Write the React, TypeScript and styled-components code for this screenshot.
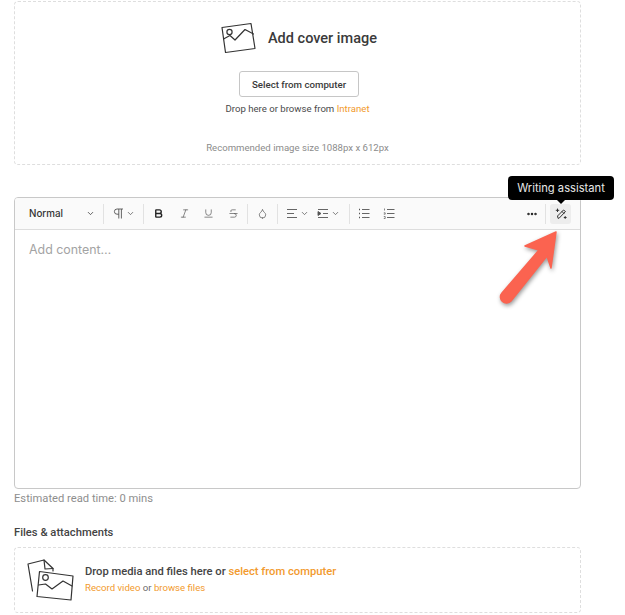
import React from "react";
import styled, { createGlobalStyle } from "styled-components";
import { Bold, ChevronDown, Droplet, Italic, MoreHorizontal, Strikethrough, Underline } from "lucide-react";

const GlobalStyle = createGlobalStyle`
  html, body {
    margin: 0;
    padding: 0;
    background: #ffffff;
  }
  body {
    font-family: Roboto, "Liberation Sans", sans-serif;
    color: #3b3b3b;
  }
`;

const Page = styled.div`
  position: relative;
  width: 625px;
  height: 615px;
  overflow: hidden;
  box-sizing: border-box;
  padding: 1px 44px 0 14px;
`;

const CoverBox = styled.section`
  box-sizing: border-box;
  height: 164px;
  border: 1px dashed #dedede;
  border-radius: 4px;
  display: flex;
  flex-direction: column;
  align-items: center;
  padding-top: 20px;
`;

const CoverTitleRow = styled.div`
  display: flex;
  align-items: center;
  gap: 12px;
  height: 32px;
  margin-left: 2px;
`;

const CoverTitle = styled.h2`
  margin: 0;
  font-size: 14.5px;
  font-weight: 500;
  color: #3a3a3a;
`;

const SelectButton = styled.button`
  box-sizing: border-box;
  width: 120px;
  height: 26px;
  margin: 17px 0 0 3px;
  background: #fff;
  border: 1px solid #c6c6c6;
  border-radius: 3px;
  font-family: Roboto, sans-serif;
  font-size: 9.7px;
  font-weight: 500;
  color: #3b3b3b;
  padding: 0;
`;

const DropHint = styled.p`
  margin: 6px 0 0;
  font-size: 9.6px;
  line-height: 12px;
  color: #4a4a4a;
`;

const OrangeText = styled.span`
  color: #f29a2e;
`;

const CoverNote = styled.p`
  margin: 27px 0 0;
  font-size: 9.6px;
  line-height: 12px;
  color: #8c8c8c;
`;

const Editor = styled.section`
  box-sizing: border-box;
  height: 292px;
  margin-top: 32px;
  border: 1px solid #c8c8c8;
  border-radius: 4px;
  overflow: hidden;
`;

const Toolbar = styled.div`
  box-sizing: border-box;
  height: 32px;
  background: #fafafa;
  border-bottom: 1px solid #dddddd;
  display: flex;
  align-items: center;
  padding: 0 9px 0 14px;
  color: #555555;
`;

const StyleSelect = styled.div`
  width: 74px;
  display: flex;
  align-items: center;
  justify-content: space-between;
  font-family: Inter, sans-serif;
  font-size: 9.8px;
  font-weight: 500;
  color: #333;
  padding-right: 8px;
  box-sizing: border-box;
`;

const ToolDivider = styled.span`
  width: 1px;
  height: 20px;
  background: #e2e2e2;
  flex: none;
`;

const ToolGroup = styled.div<{ $width: number; $pad?: number }>`
  box-sizing: border-box;
  width: ${(props) => props.$width}px;
  padding-left: ${(props) => props.$pad ?? 0}px;
  display: flex;
  align-items: center;
  justify-content: ${(props) => (props.$pad === undefined ? "center" : "flex-start")};
  gap: 2px;
  flex: none;
`;

const ToolSpacer = styled.div`
  flex: 1;
`;

const AssistantButton = styled.button`
  width: 21px;
  height: 20px;
  margin-left: 4px;
  padding: 0;
  border: none;
  border-radius: 3px;
  background: #ededed;
  display: flex;
  align-items: center;
  justify-content: center;
`;

const EditorPlaceholder = styled.div`
  padding: 12px 14px;
  font-family: Inter, sans-serif;
  font-size: 12.4px;
  line-height: 16px;
  color: #a3a3a3;
`;

const ReadTime = styled.p`
  margin: 3px 0 0;
  font-size: 11.2px;
  line-height: 13px;
  color: #8e8e8e;
`;

const SectionLabel = styled.h3`
  margin: 21px 0 0;
  font-size: 11.2px;
  font-weight: 500;
  line-height: 13px;
  color: #444;
`;

const AttachBox = styled.section`
  box-sizing: border-box;
  height: 66px;
  margin-top: 8px;
  border: 1px dashed #dedede;
  border-radius: 4px;
  display: flex;
  align-items: center;
  gap: 10px;
  padding-left: 12px;
`;

const AttachText = styled.div`
  display: flex;
  flex-direction: column;
  gap: 4px;
  margin-bottom: 3px;
`;

const AttachMain = styled.span`
  font-size: 11.2px;
  font-weight: 500;
  line-height: 13px;
  color: #444;
`;

const AttachSub = styled.span`
  font-size: 9.6px;
  line-height: 11px;
  color: #6b6b6b;
`;

const Tooltip = styled.div`
  position: absolute;
  left: 508px;
  top: 176px;
  box-sizing: border-box;
  width: 106px;
  height: 24px;
  background: #000;
  border-radius: 4px;
  color: #e8e8e8;
  font-family: Inter, sans-serif;
  font-size: 11.2px;
  line-height: 24px;
  text-align: center;

  &::after {
    content: "";
    position: absolute;
    left: 49px;
    bottom: -4px;
    border-left: 4px solid transparent;
    border-right: 4px solid transparent;
    border-top: 4px solid #000;
  }
`;

const ArrowMark = styled.svg`
  position: absolute;
  left: 495px;
  top: 226px;
  filter: drop-shadow(1px 2px 2px rgba(0, 0, 0, 0.4));
`;

function CoverIcon() {
  return (
    <svg width="36" height="34" viewBox="0 0 36 34" fill="none" stroke="#333" strokeWidth="1.2" strokeLinejoin="round" strokeLinecap="round">
      <path d="M2 6.5 31 2.5 35 27.5 5.5 31.5Z" />
      <circle cx="9.5" cy="11" r="2.6" />
      <path d="M3.5 18 10 14.5 15 19 25 8.5 33.5 13" />
    </svg>
  );
}

function FilesIcon() {
  return (
    <svg width="48" height="44" viewBox="0 0 48 44" fill="none" stroke="#333" strokeWidth="1.2" strokeLinejoin="round" strokeLinecap="round">
      <path d="M5.5 33 1 6 17 2 26 10.5V13" />
      <path d="M17 2 18 11 26 10.5" />
      <path d="M12.5 13.5 46 18 44 42 10 38.5Z" />
      <circle cx="18.5" cy="19.5" r="2.8" />
      <path d="M11.5 27 18.5 26 25 31 36 23 45 28" />
    </svg>
  );
}

function AssistantIcon() {
  return (
    <svg width="12" height="12" viewBox="0 0 12 12" fill="none" stroke="#333" strokeWidth="1" strokeLinecap="round" strokeLinejoin="round">
      <path d="M3 10 2.5 8 8.5 2 10.5 3.5 4.5 9.8Z" />
      <path d="M7 3.5 9 5.5" />
      <path d="M2.5 1v2.6M1.2 2.3h2.6" />
      <path d="M10.2 8.5v2M9.2 9.5h2" />
    </svg>
  );
}

function ParagraphIcon() {
  return (
    <svg width="11" height="11" viewBox="0 0 11 11" fill="none" stroke="currentColor" strokeWidth="0.9">
      <path d="M10 1H4a2.6 2.6 0 0 0 0 5.2h1.8" />
      <path d="M5.8 1v9.5M8.4 1v9.5" />
    </svg>
  );
}

function AlignIcon() {
  return (
    <svg width="12" height="11" viewBox="0 0 12 11" fill="none" stroke="currentColor" strokeWidth="0.9">
      <path d="M1 1.5h10M1 5.5h7M1 9.5h10" />
    </svg>
  );
}

function IndentIcon() {
  return (
    <svg width="12" height="11" viewBox="0 0 12 11" fill="none" stroke="currentColor" strokeWidth="0.9">
      <path d="M1 1.5h10M6 5.5h5M1 9.5h10" />
      <path d="M1 3.5 4 5.5 1 7.5Z" fill="currentColor" />
    </svg>
  );
}

function BulletIcon() {
  return (
    <svg width="12" height="11" viewBox="0 0 12 11" fill="none" stroke="currentColor" strokeWidth="0.9">
      <path d="M4 1.5h7.5M4 5.5h7.5M4 9.5h7.5" />
      <path d="M1 1.5h1M1 5.5h1M1 9.5h1" strokeWidth="1.6" />
    </svg>
  );
}

function NumberedIcon() {
  return (
    <svg width="12" height="11" viewBox="0 0 12 11" fill="none" stroke="currentColor" strokeWidth="0.9">
      <path d="M4 1.5h7.5M4 5.5h7.5M4 9.5h7.5" />
      <path d="M1.5 0.5v2M0.8 4.8h1.4v1.4H0.8M0.8 8.5h1.4v2H0.8" strokeWidth="0.7" />
    </svg>
  );
}

export default function App() {
  return (
    <Page>
      <GlobalStyle />
      <CoverBox>
        <CoverTitleRow>
          <CoverIcon />
          <CoverTitle>Add cover image</CoverTitle>
        </CoverTitleRow>
        <SelectButton>Select from computer</SelectButton>
        <DropHint>
          Drop here or browse from <OrangeText>Intranet</OrangeText>
        </DropHint>
        <CoverNote>Recommended image size 1088px x 612px</CoverNote>
      </CoverBox>

      <Editor>
        <Toolbar>
          <StyleSelect>
            Normal
            <ChevronDown size={9} strokeWidth={2} />
          </StyleSelect>
          <ToolDivider />
          <ToolGroup $width={39} $pad={9}>
            <ParagraphIcon />
            <ChevronDown size={9} />
          </ToolGroup>
          <ToolDivider />
          <ToolGroup $width={29}>
            <Bold size={11} strokeWidth={3} color="#222" />
          </ToolGroup>
          <ToolGroup $width={23}>
            <Italic size={11} strokeWidth={1.5} />
          </ToolGroup>
          <ToolGroup $width={24}>
            <Underline size={11} strokeWidth={1.5} />
          </ToolGroup>
          <ToolGroup $width={27}>
            <Strikethrough size={11} strokeWidth={1.5} />
          </ToolGroup>
          <ToolDivider />
          <ToolGroup $width={29}>
            <Droplet size={11} strokeWidth={1.5} />
          </ToolGroup>
          <ToolDivider />
          <ToolGroup $width={38} $pad={8}>
            <AlignIcon />
            <ChevronDown size={9} />
          </ToolGroup>
          <ToolGroup $width={33} $pad={1}>
            <IndentIcon />
            <ChevronDown size={9} />
          </ToolGroup>
          <ToolDivider />
          <ToolGroup $width={28}>
            <BulletIcon />
          </ToolGroup>
          <ToolGroup $width={22}>
            <NumberedIcon />
          </ToolGroup>
          <ToolSpacer />
          <ToolGroup $width={14}>
            <MoreHorizontal size={12} strokeWidth={3} color="#222" />
          </ToolGroup>
          <ToolGroup $width={6} />
          <ToolDivider />
          <AssistantButton aria-label="Writing assistant">
            <AssistantIcon />
          </AssistantButton>
        </Toolbar>
        <EditorPlaceholder>Add content…</EditorPlaceholder>
      </Editor>

      <ReadTime>Estimated read time: 0 mins</ReadTime>
      <SectionLabel>Files &amp; attachments</SectionLabel>

      <AttachBox>
        <FilesIcon />
        <AttachText>
          <AttachMain>
            Drop media and files here or <OrangeText>select from computer</OrangeText>
          </AttachMain>
          <AttachSub>
            <OrangeText>Record video</OrangeText> or <OrangeText>browse files</OrangeText>
          </AttachSub>
        </AttachText>
      </AttachBox>

      <Tooltip>Writing assistant</Tooltip>
      <ArrowMark width="70" height="80" viewBox="0 0 70 80">
        <path d="M61 6 30 20 44 24 7 67A6 6 0 0 0 16 75L52 30 56 42Z" fill="#fb6350" stroke="#fb6350" strokeWidth="1.5" strokeLinejoin="round" />
      </ArrowMark>
    </Page>
  );
}
